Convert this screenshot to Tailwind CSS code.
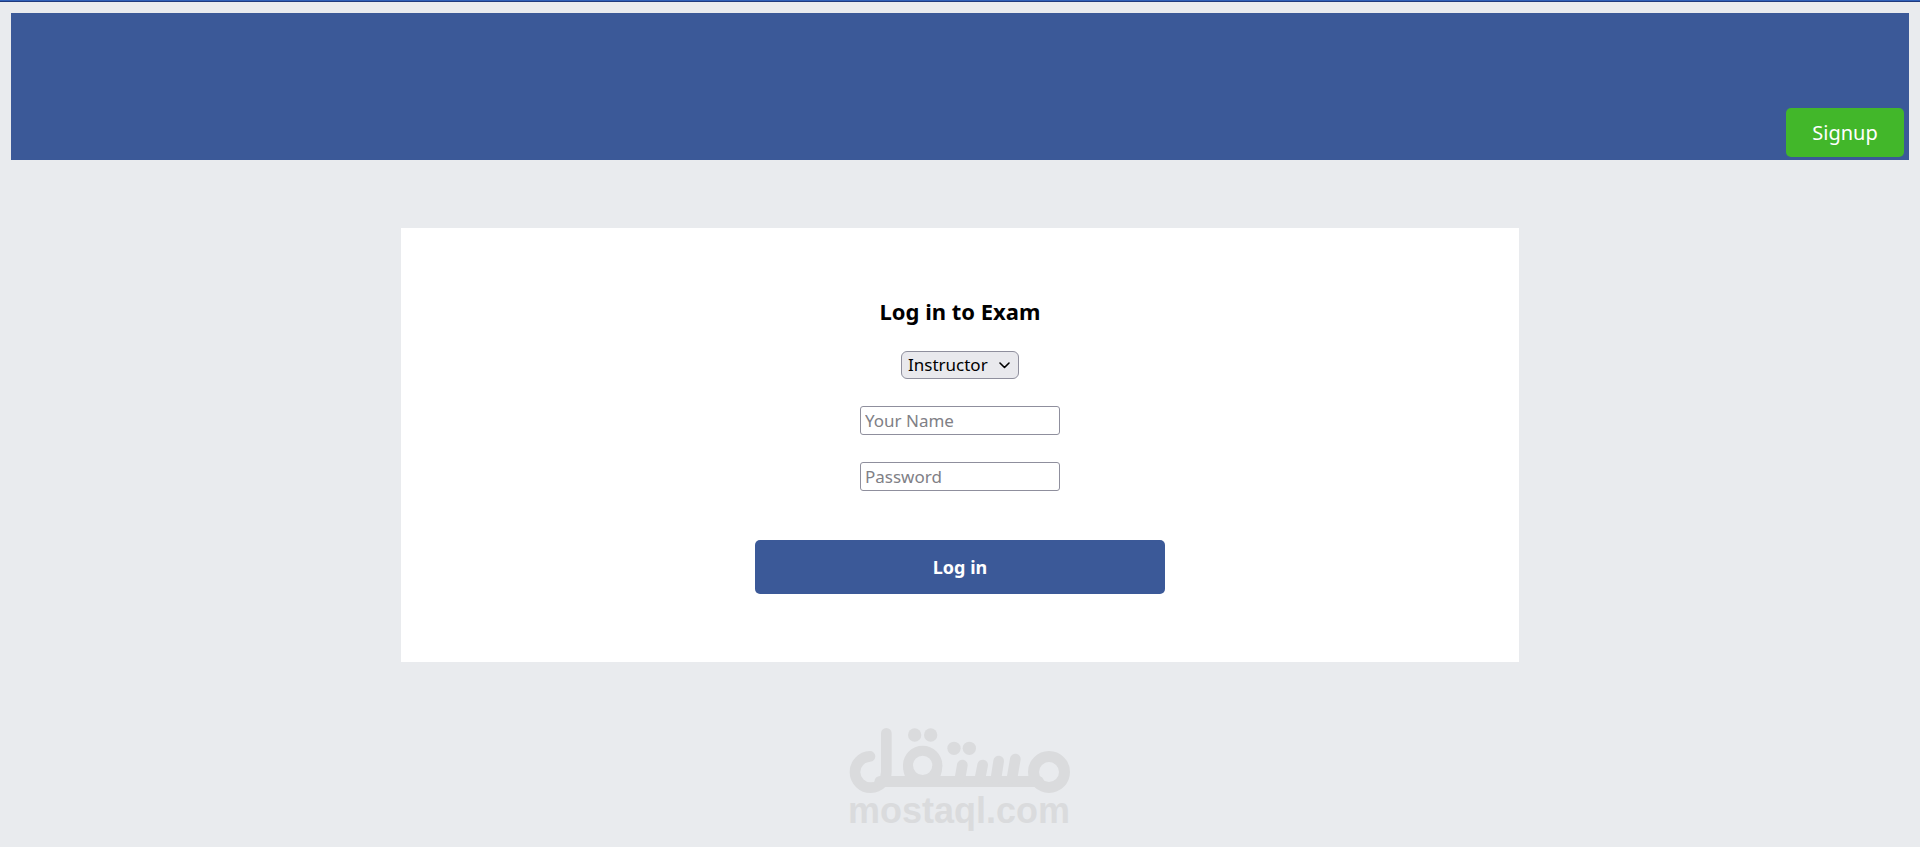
<!DOCTYPE html>
<html lang="en">
<head>
  <meta charset="UTF-8">
  <meta name="viewport" content="width=device-width, initial-scale=1.0">
  <title>Log in to Exam</title>
  <script src="https://cdn.jsdelivr.net/npm/@tailwindcss/browser@4"></script>
</head>
<body class="min-h-screen bg-[#e9ebee] font-['Noto_Sans',sans-serif] text-black">
  <!-- Top line -->
  <div class="h-[2px] border-b border-[#1f3a7d] bg-[#3060b8]"></div>

  <!-- Header -->
  <header class="mx-[11px] mt-[11px] flex h-[147px] items-end justify-end bg-[#3b5998] px-[5px] pb-[3px]">
    <button type="button" class="h-[49px] w-[118px] rounded-[5px] bg-[#42b72a] text-[20px] text-white">Signup</button>
  </header>

  <!-- Login card -->
  <main class="mx-auto mt-[68px] w-full max-w-[1118px] bg-white py-[68px]">
    <form class="flex flex-col items-center">
      <h1 class="text-[22px] leading-[31px] font-bold">Log in to Exam</h1>

      <div class="relative mt-6">
        <select id="role" aria-label="Role" class="block h-[28px] w-[118px] appearance-none rounded-[6px] border border-[#8f8f9d] bg-[#e9e9ed] pl-[6px] text-[17px] leading-[26px]">
          <option>Instructor</option>
          <option>Student</option>
        </select>
        <svg class="pointer-events-none absolute top-[11px] right-[9px]" width="11" height="7" viewBox="0 0 11 7" fill="none" stroke="#000" stroke-width="1.6" stroke-linecap="round" stroke-linejoin="round">
          <path d="M1 1l4.5 4.5L10 1" />
        </svg>
      </div>

      <input id="name" type="text" aria-label="Your Name" placeholder="Your Name" class="mt-[27px] h-[29px] w-[200px] rounded-[3px] border border-[#8f8f9d] bg-white px-1 text-[17px] placeholder:text-[#808086]">

      <input id="password" type="password" aria-label="Password" placeholder="Password" class="mt-[27px] h-[29px] w-[200px] rounded-[3px] border border-[#8f8f9d] bg-white px-1 text-[17px] placeholder:text-[#808086]">

      <button type="submit" class="mt-[49px] h-[54px] w-[410px] rounded-[5px] bg-[#3b5998] text-[18px] font-bold text-white">Log in</button>
    </form>
  </main>

  <!-- Watermark -->
  <footer class="mt-[66px] flex flex-col items-center pr-[2px] text-[#dadbdd]">
    <svg width="221" height="65" viewBox="57 54 663 195" fill="none" stroke="currentColor" stroke-width="32" stroke-linecap="round">
      <path d="M120 139A47 47 0 1 0 169 186V70" />
      <path d="M150 214.500H625" stroke-width="33" />
      <circle cx="278" cy="166" r="44" stroke-width="30" />
      <path d="M219 166h20l18 32h42l18-32h20q0 20-8 40H227q-8-20-8-40z" fill="currentColor" stroke="none" />
      <path d="M397 165l-7 40M458 165l-8 40M506 153l-8 52M556 147l-10 58" />
      <circle cx="657" cy="186" r="46.500" stroke-width="33" />
      <g fill="currentColor" stroke="none">
        <circle cx="254" cy="75" r="20" />
        <circle cx="302" cy="75" r="20" />
        <circle cx="372" cy="115" r="20" />
        <circle cx="418" cy="115" r="20" />
      </g>
    </svg>
    <p class="font-['Liberation_Sans',sans-serif] text-[36px] leading-[36px] font-bold">mostaql.com</p>
  </footer>
</body>
</html>
